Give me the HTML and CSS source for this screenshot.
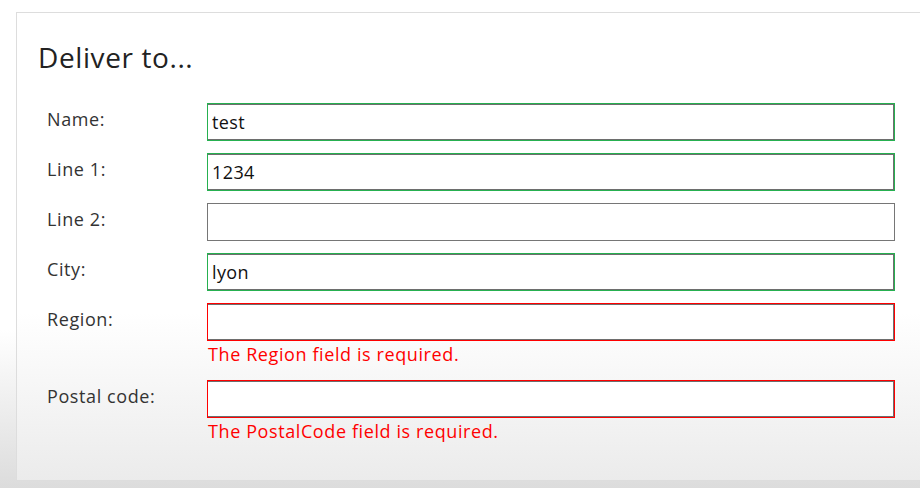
FILE: index.html
```html
<!DOCTYPE html>
<html lang="en">
<head>
<meta charset="utf-8">
<title>Deliver to...</title>
<link rel="stylesheet" href="styles.css">
</head>
<body>
<div class="panel">
  <h4 class="title">Deliver to...</h4>
  <form class="form">
    <div class="form-field">
      <label>Name:</label>
      <div class="field"><input class="input modified valid" value="test"></div>
    </div>
    <div class="form-field">
      <label>Line 1:</label>
      <div class="field"><input class="input modified valid" value="1234"></div>
    </div>
    <div class="form-field">
      <label>Line 2:</label>
      <div class="field"><input class="input" value=""></div>
    </div>
    <div class="form-field">
      <label>City:</label>
      <div class="field"><input class="input modified valid" value="lyon"></div>
    </div>
    <div class="form-field">
      <label>Region:</label>
      <div class="field"><input class="input modified invalid" value="">
        <div class="validation-message">The Region field is required.</div></div>
    </div>
    <div class="form-field">
      <label>Postal code:</label>
      <div class="field"><input class="input modified invalid" value="">
        <div class="validation-message">The PostalCode field is required.</div></div>
    </div>
  </form>
</div>
</body>
</html>
```
FILE: styles.css
```css
html, body {
  margin: 0;
  padding: 0;
  height: 488px;
  overflow: hidden;
}
body {
  background: linear-gradient(to bottom, #ffffff 0, #ffffff 330px, #dcdcdc 488px);
  font-family: "Open Sans", "Noto Sans", sans-serif;
  color: #333;
}
.panel {
  margin: 12px 0 0 16px;
  width: 940px;
  height: 469px;
  border: 1px solid #dddddd;
  border-right: none;
  background: linear-gradient(to bottom, #ffffff 0, #ffffff 300px, #ebebeb 469px);
  box-sizing: border-box;
  padding: 26px 0 0 21px;
}
.title {
  margin: 0 0 28px 0;
  font-size: 28px;
  font-weight: 500;
  line-height: 36px;
  letter-spacing: 0.6px;
  color: #222;
}
.form {
  display: flex;
  flex-direction: column;
  gap: 12px;
  padding-left: 9px;
}
.form-field {
  display: flex;
  align-items: flex-start;
}
.form-field label {
  width: 160px;
  flex: none;
  font-size: 18px;
  line-height: 24px;
  letter-spacing: 0.6px;
  padding-top: 4px;
  color: #333;
}
.field {
  width: 688px;
}
.input {
  display: block;
  width: 100%;
  height: 38px;
  box-sizing: border-box;
  margin: 0;
  border: 1px solid #767676;
  border-radius: 0;
  padding: 0 4px;
  font-family: inherit;
  font-size: 18px;
  letter-spacing: 0.4px;
  color: #111;
  background: #fff;
  outline: none;
}
.input.valid {
  border-color: #26b050;
  box-shadow: inset 0 1px 0 #6e6e6e, inset -1px 0 0 #6e6e6e, inset 0 -1px 0 #6e6e6e;
}
.input.invalid {
  border-color: #ff0000;
  box-shadow: inset 0 1px 0 #6e6e6e, inset -1px 0 0 #6e6e6e, inset 0 -1px 0 #6e6e6e;
}
.validation-message {
  color: #ff0000;
  font-size: 18px;
  line-height: 27px;
  letter-spacing: 0.6px;
  padding-left: 1px;
}
```
